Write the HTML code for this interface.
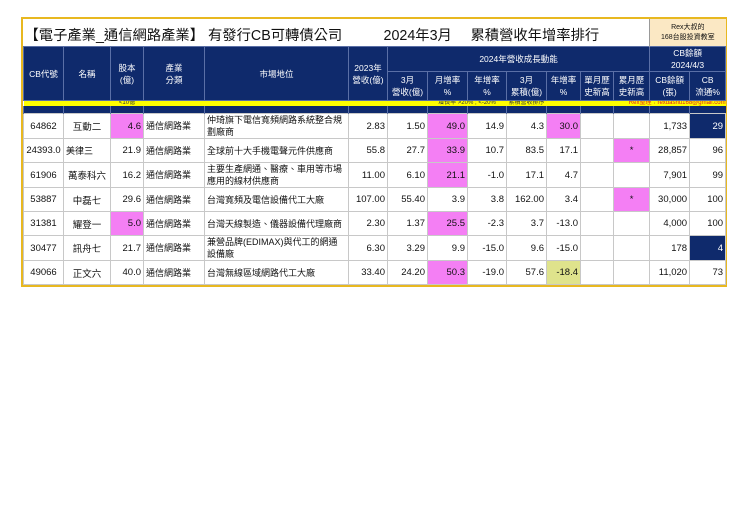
<!DOCTYPE html>
<html><head><meta charset="utf-8"><style>
body{margin:0;background:#fff;width:740px;height:523px;position:relative;font-family:"Liberation Sans","Noto Sans CJK TC",sans-serif;}
.frame{position:absolute;left:21px;top:17px;width:702px;border:2px solid #e8b820;}
table{border-collapse:collapse;table-layout:fixed;width:702px;}
td{padding:0;overflow:hidden;white-space:nowrap;font-size:9.5px;color:#111;}
.t td{height:27px;font-size:14.3px;position:relative;}
.h td{background:#0f2a6c;color:#fff;text-align:center;font-size:8.5px;line-height:12px;border:1px solid #5a6fa6;}
.y td{height:5px;background:#ffff00;font-size:6px;line-height:5px;text-align:center;color:#333;border-top:1px solid #0f2a6c;}
.n td{height:7px;background:#0f2a6c;border-left:1px solid #5a6fa6;}
.d td{height:23px;border:1px solid #c8c8c8;text-align:right;padding-right:2px;}
.d td.c{text-align:center;padding:0}
.d td.l{text-align:left;padding-left:2px;white-space:normal;line-height:12px;font-size:9px}
.m{background:#f47ff4}
.nv{background:#0f2a6c;color:#fff!important}
.o{background:#dfe38c}
.ts{position:absolute;top:5px;}
</style></head><body>
<div class="frame"><table>
<colgroup><col style="width:40px"><col style="width:47px"><col style="width:33px"><col style="width:61px"><col style="width:144px"><col style="width:39px"><col style="width:40px"><col style="width:40px"><col style="width:39px"><col style="width:40px"><col style="width:34px"><col style="width:33px"><col style="width:36px"><col style="width:40px"><col style="width:36px"></colgroup>
<tr class="t"><td colspan="13"><span class="ts" style="left:1px">【電子產業_通信網路產業】 有發行CB可轉債公司</span><span class="ts" style="left:360px">2024年3月</span><span class="ts" style="left:447px">累積營收年增率排行</span></td><td colspan="2" style="background:#fbe8c4;font-size:7px;text-align:center;line-height:10px;border-left:1px solid #999">Rex大叔的<br>168台股投資教室</td></tr>
<tr class="h"><td rowspan="2">CB代號</td><td rowspan="2">名稱</td><td rowspan="2">股本<br>(億)</td><td rowspan="2">產業<br>分類</td><td rowspan="2">市場地位</td><td rowspan="2">2023年<br>營收(億)</td><td colspan="7" style="height:22px">2024年營收成長動能</td><td colspan="2">CB餘額<br>2024/4/3</td></tr>
<tr class="h" style="height:29px"><td>3月<br>營收(億)</td><td>月增率<br>%</td><td>年增率<br>%</td><td>3月<br>累積(億)</td><td>年增率<br>%</td><td>單月歷<br>史新高</td><td>累月歷<br>史新高</td><td>CB餘額<br>(張)</td><td>CB<br>流通%</td></tr>
<tr class="y"><td></td><td></td><td>&lt;10億</td><td></td><td></td><td></td><td></td><td colspan="2">增長率 &gt;20% ; &lt;-20%</td><td>累積營收排序</td><td></td><td></td><td colspan="3" style="color:#e02020;text-align:right">Rex整理：rexdashu168@gmail.com</td></tr>
<tr class="n"><td></td><td></td><td></td><td></td><td></td><td></td><td></td><td></td><td></td><td></td><td></td><td></td><td></td><td></td><td></td></tr>
<tr class="d"><td class="c">64862</td><td class="c">互動二</td><td class="m">4.6</td><td class="l">通信網路業</td><td class="l">仲琦旗下電信寬頻網路系統整合規劃廠商</td><td>2.83</td><td>1.50</td><td class="m">49.0</td><td>14.9</td><td>4.3</td><td class="m">30.0</td><td></td><td></td><td>1,733</td><td class="nv">29</td></tr>
<tr class="d"><td class="c">24393.0</td><td class="l">美律三</td><td>21.9</td><td class="l">通信網路業</td><td class="l">全球前十大手機電聲元件供應商</td><td>55.8</td><td>27.7</td><td class="m">33.9</td><td>10.7</td><td>83.5</td><td>17.1</td><td></td><td class="m c">*</td><td>28,857</td><td>96</td></tr>
<tr class="d"><td class="c">61906</td><td class="c">萬泰科六</td><td>16.2</td><td class="l">通信網路業</td><td class="l">主要生產網通、醫療、車用等市場應用的線材供應商</td><td>11.00</td><td>6.10</td><td class="m">21.1</td><td>-1.0</td><td>17.1</td><td>4.7</td><td></td><td></td><td>7,901</td><td>99</td></tr>
<tr class="d"><td class="c">53887</td><td class="c">中磊七</td><td>29.6</td><td class="l">通信網路業</td><td class="l">台灣寬頻及電信設備代工大廠</td><td>107.00</td><td>55.40</td><td>3.9</td><td>3.8</td><td>162.00</td><td>3.4</td><td></td><td class="m c">*</td><td>30,000</td><td>100</td></tr>
<tr class="d"><td class="c">31381</td><td class="c">耀登一</td><td class="m">5.0</td><td class="l">通信網路業</td><td class="l">台灣天線製造、儀器設備代理廠商</td><td>2.30</td><td>1.37</td><td class="m">25.5</td><td>-2.3</td><td>3.7</td><td>-13.0</td><td></td><td></td><td>4,000</td><td>100</td></tr>
<tr class="d"><td class="c">30477</td><td class="c">訊舟七</td><td>21.7</td><td class="l">通信網路業</td><td class="l">兼營品牌(EDIMAX)與代工的網通設備廠</td><td>6.30</td><td>3.29</td><td>9.9</td><td>-15.0</td><td>9.6</td><td>-15.0</td><td></td><td></td><td>178</td><td class="nv">4</td></tr>
<tr class="d"><td class="c">49066</td><td class="c">正文六</td><td>40.0</td><td class="l">通信網路業</td><td class="l">台灣無線區域網路代工大廠</td><td>33.40</td><td>24.20</td><td class="m">50.3</td><td>-19.0</td><td>57.6</td><td class="o">-18.4</td><td></td><td></td><td>11,020</td><td>73</td></tr>
</table></div>
</body></html>
